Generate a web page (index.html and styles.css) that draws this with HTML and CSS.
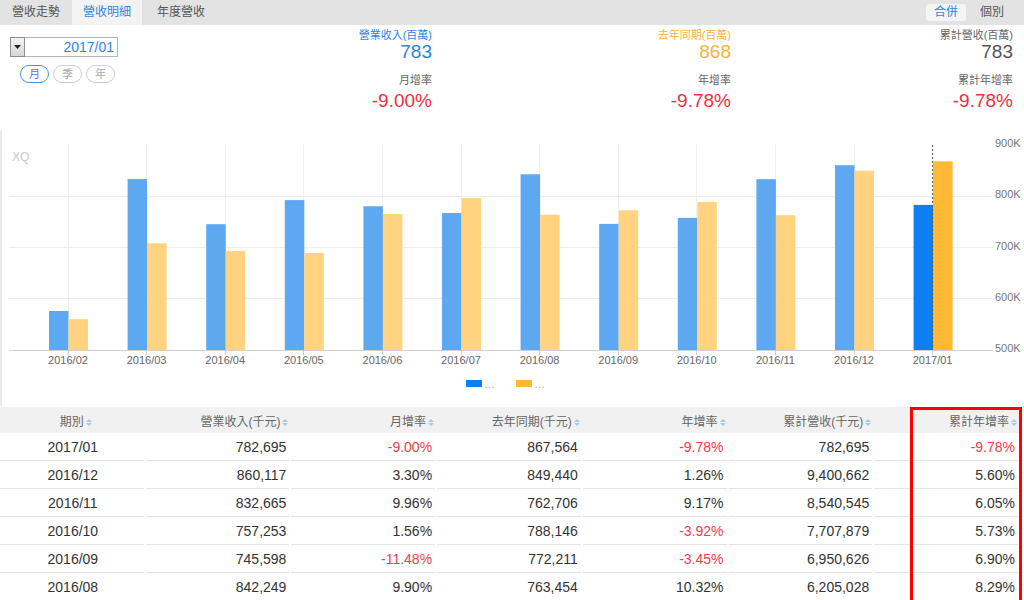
FILE: index.html
```html
<!DOCTYPE html>
<html lang="zh-Hant">
<head>
<meta charset="utf-8">
<title>營收明細</title>
<link rel="stylesheet" href="styles.css">
</head>
<body>
<div class="page">
  <div class="tabs">
    <div class="tab">營收走勢</div>
    <div class="tab active">營收明細</div>
    <div class="tab tab3">年度營收</div>
    <div class="tabs-right">
      <span class="seg on">合併</span>
      <span class="seg">個別</span>
    </div>
  </div>

  <div class="top">
    <div class="controls">
      <div class="picker">
        <span class="drop"><svg width="7" height="4" viewBox="0 0 7 4"><path d="M0 0H7L3.5 4Z" fill="#222"/></svg></span>
        <span class="date">2017/01</span>
      </div>
      <div class="pills">
        <span class="pill on">月</span>
        <span class="pill">季</span>
        <span class="pill">年</span>
      </div>
    </div>
    <div class="stat">
      <div class="lbl blue">營業收入(百萬)</div>
      <div class="val blue">783</div>
      <div class="lbl lbl2">月增率</div>
      <div class="val val2 red">-9.00%</div>
    </div>
    <div class="stat">
      <div class="lbl orange">去年同期(百萬)</div>
      <div class="val orange">868</div>
      <div class="lbl lbl2">年增率</div>
      <div class="val val2 red">-9.78%</div>
    </div>
    <div class="stat">
      <div class="lbl">累計營收(百萬)</div>
      <div class="val dark">783</div>
      <div class="lbl lbl2">累計年增率</div>
      <div class="val val2 red">-9.78%</div>
    </div>
  </div>

  <div class="chart">
    <svg width="1022" height="276" viewBox="0 0 1022 276" class="plot">
      <g stroke="#ececec" stroke-width="1">
        <line x1="9" y1="66.5" x2="993" y2="66.5"/>
        <line x1="9" y1="117.5" x2="993" y2="117.5"/>
        <line x1="9" y1="168.5" x2="993" y2="168.5"/>
      </g>
      <g stroke="#f0f0f0" stroke-width="1">
        <line x1="68.5" y1="15" x2="68.5" y2="220"/>
        <line x1="146.5" y1="15" x2="146.5" y2="220"/>
        <line x1="225.5" y1="15" x2="225.5" y2="220"/>
        <line x1="303.5" y1="15" x2="303.5" y2="220"/>
        <line x1="382.5" y1="15" x2="382.5" y2="220"/>
        <line x1="461.5" y1="15" x2="461.5" y2="220"/>
        <line x1="539.5" y1="15" x2="539.5" y2="220"/>
        <line x1="618.5" y1="15" x2="618.5" y2="220"/>
        <line x1="696.5" y1="15" x2="696.5" y2="220"/>
        <line x1="775.5" y1="15" x2="775.5" y2="220"/>
        <line x1="854.5" y1="15" x2="854.5" y2="220"/>
      </g>
      <text x="12" y="31" class="xq">XQ</text>
      <g fill="#5ea7f1">
        <rect x="49" y="181" width="19.5" height="39"/>
        <rect x="127.6" y="49.1" width="19.5" height="170.9"/>
        <rect x="206.2" y="94.2" width="19.5" height="125.8"/>
        <rect x="284.8" y="70.1" width="19.5" height="149.9"/>
        <rect x="363.4" y="76.3" width="19.5" height="143.7"/>
        <rect x="442" y="83" width="19.5" height="137"/>
        <rect x="520.6" y="44.3" width="19.5" height="175.7"/>
        <rect x="599.2" y="93.9" width="19.5" height="126.1"/>
        <rect x="677.8" y="87.9" width="19.5" height="132.1"/>
        <rect x="756.4" y="49.2" width="19.5" height="170.8"/>
        <rect x="835" y="35.2" width="19.5" height="184.8"/>
      </g>
      <g fill="#ffd37f">
        <rect x="68.5" y="189.2" width="19.5" height="30.8"/>
        <rect x="147.1" y="113.2" width="19.5" height="106.8"/>
        <rect x="225.7" y="120.9" width="19.5" height="99.1"/>
        <rect x="304.3" y="123" width="19.5" height="97"/>
        <rect x="382.9" y="84" width="19.5" height="136"/>
        <rect x="461.5" y="68.1" width="19.5" height="151.9"/>
        <rect x="540.1" y="84.7" width="19.5" height="135.3"/>
        <rect x="618.7" y="80.3" width="19.5" height="139.7"/>
        <rect x="697.3" y="72.1" width="19.5" height="147.9"/>
        <rect x="775.9" y="85.2" width="19.5" height="134.8"/>
        <rect x="854.5" y="40.7" width="19.5" height="179.3"/>
      </g>
      <rect x="913.6" y="74.9" width="19.5" height="145.1" fill="#0d7ff0"/>
      <rect x="933.1" y="31.3" width="19.5" height="188.7" fill="#ffb934"/>
      <line x1="932.6" y1="15" x2="932.6" y2="220" stroke="#555" stroke-width="1" stroke-dasharray="2 2"/>
      <line x1="9" y1="220.5" x2="993" y2="220.5" stroke="#cfcfcf" stroke-width="1"/>
      <g stroke="#cfcfcf" stroke-width="1">
        <line x1="68.5" y1="220" x2="68.5" y2="225"/>
        <line x1="146.5" y1="220" x2="146.5" y2="225"/>
        <line x1="225.5" y1="220" x2="225.5" y2="225"/>
        <line x1="303.5" y1="220" x2="303.5" y2="225"/>
        <line x1="382.5" y1="220" x2="382.5" y2="225"/>
        <line x1="461.5" y1="220" x2="461.5" y2="225"/>
        <line x1="539.5" y1="220" x2="539.5" y2="225"/>
        <line x1="618.5" y1="220" x2="618.5" y2="225"/>
        <line x1="696.5" y1="220" x2="696.5" y2="225"/>
        <line x1="775.5" y1="220" x2="775.5" y2="225"/>
        <line x1="854.5" y1="220" x2="854.5" y2="225"/>
        <line x1="932.5" y1="220" x2="932.5" y2="225"/>
      </g>
      <g class="ylab">
        <text x="995" y="17">900K</text>
        <text x="995" y="68">800K</text>
        <text x="995" y="120">700K</text>
        <text x="995" y="171">600K</text>
        <text x="995" y="222">500K</text>
      </g>
      <g class="xlab">
        <text x="68" y="234">2016/02</text>
        <text x="146.6" y="234">2016/03</text>
        <text x="225.2" y="234">2016/04</text>
        <text x="303.8" y="234">2016/05</text>
        <text x="382.4" y="234">2016/06</text>
        <text x="461" y="234">2016/07</text>
        <text x="539.6" y="234">2016/08</text>
        <text x="618.2" y="234">2016/09</text>
        <text x="696.8" y="234">2016/10</text>
        <text x="775.4" y="234">2016/11</text>
        <text x="854" y="234">2016/12</text>
        <text x="932.6" y="234">2017/01</text>
      </g>
      <rect x="466" y="250" width="16" height="7" fill="#0d7ff0"/>
      <text x="484" y="258" class="dots">…</text>
      <rect x="516" y="250" width="16" height="7" fill="#ffb934"/>
      <text x="534" y="258" class="dots">…</text>
    </svg>
  </div>

  <div class="tablewrap">
    <table class="grid">
      <thead>
        <tr>
          <th class="c">期別<svg class="sort" width="6" height="9" viewBox="0 0 6 9"><path d="M0 4L3 1L6 4ZM0 5L3 8L6 5Z"/></svg></th>
          <th>營業收入(千元)<svg class="sort" width="6" height="9" viewBox="0 0 6 9"><path d="M0 4L3 1L6 4ZM0 5L3 8L6 5Z"/></svg></th>
          <th>月增率<svg class="sort" width="6" height="9" viewBox="0 0 6 9"><path d="M0 4L3 1L6 4ZM0 5L3 8L6 5Z"/></svg></th>
          <th>去年同期(千元)<svg class="sort" width="6" height="9" viewBox="0 0 6 9"><path d="M0 4L3 1L6 4ZM0 5L3 8L6 5Z"/></svg></th>
          <th>年增率<svg class="sort" width="6" height="9" viewBox="0 0 6 9"><path d="M0 4L3 1L6 4ZM0 5L3 8L6 5Z"/></svg></th>
          <th>累計營收(千元)<svg class="sort" width="6" height="9" viewBox="0 0 6 9"><path d="M0 4L3 1L6 4ZM0 5L3 8L6 5Z"/></svg></th>
          <th>累計年增率<svg class="sort" width="6" height="9" viewBox="0 0 6 9"><path d="M0 4L3 1L6 4ZM0 5L3 8L6 5Z"/></svg></th>
        </tr>
      </thead>
      <tbody>
        <tr><td class="c">2017/01</td><td>782,695</td><td class="neg">-9.00%</td><td>867,564</td><td class="neg">-9.78%</td><td>782,695</td><td class="neg">-9.78%</td></tr>
        <tr><td class="c">2016/12</td><td>860,117</td><td>3.30%</td><td>849,440</td><td>1.26%</td><td>9,400,662</td><td>5.60%</td></tr>
        <tr><td class="c">2016/11</td><td>832,665</td><td>9.96%</td><td>762,706</td><td>9.17%</td><td>8,540,545</td><td>6.05%</td></tr>
        <tr><td class="c">2016/10</td><td>757,253</td><td>1.56%</td><td>788,146</td><td class="neg">-3.92%</td><td>7,707,879</td><td>5.73%</td></tr>
        <tr><td class="c">2016/09</td><td>745,598</td><td class="neg">-11.48%</td><td>772,211</td><td class="neg">-3.45%</td><td>6,950,626</td><td>6.90%</td></tr>
        <tr><td class="c">2016/08</td><td>842,249</td><td>9.90%</td><td>763,454</td><td>10.32%</td><td>6,205,028</td><td>8.29%</td></tr>
      </tbody>
    </table>
    <div class="highlight"></div>
  </div>
</div>
</body>
</html>
```

FILE: styles.css
```css
html, body {
  margin: 0;
  padding: 0;
  height: 600px;
  overflow: hidden;
  background: #fff;
}
body {
  font-family: "Liberation Sans", Arial, "Noto Sans CJK TC", sans-serif;
  color: #333;
}
.page {
  width: 1024px;
  height: 600px;
  overflow: hidden;
}

/* tabs */
.tabs {
  display: flex;
  height: 25px;
  background: #e3e3e3;
  font-size: 12px;
  line-height: 25px;
  color: #555;
}
.tab {
  padding: 0 11px;
}
.tab:first-child {
  padding-left: 12px;
  padding-right: 12px;
}
.tab.active {
  background: #f3f3f3;
  color: #2f86e0;
}
.tab3 {
  padding-left: 15px;
}
.tabs-right {
  margin-left: auto;
  display: flex;
  align-items: center;
  gap: 6px;
  padding-right: 12px;
}
.seg {
  line-height: 17px;
  padding: 0 8px;
  border-radius: 3px;
  font-size: 12px;
  color: #555;
}
.seg.on {
  background: #f5f5f5;
  color: #2f86e0;
}

/* top */
.top {
  display: grid;
  grid-template-columns: 133px 299px 299px 282px;
  height: 105px;
}
.controls {
  padding: 12px 0 0 10px;
}
.picker {
  display: flex;
  width: 108px;
  height: 20px;
}
.drop {
  width: 13px;
  height: 18px;
  border: 1px solid #8e8e8e;
  background: linear-gradient(#f4f4f4, #d6d6d6);
  display: flex;
  align-items: center;
  justify-content: center;
}
.date {
  flex: 1;
  height: 18px;
  border: 1px solid #b5b5b5;
  border-left: none;
  text-align: right;
  padding-right: 3px;
  font-size: 14px;
  line-height: 18px;
  color: #2f86e0;
}
.pills {
  display: flex;
  gap: 4px;
  margin: 8px 0 0 10px;
}
.pill {
  width: 27px;
  height: 16px;
  border: 1px solid #cfcfcf;
  border-radius: 9px;
  font-size: 11px;
  line-height: 16px;
  text-align: center;
  color: #aaa;
}
.pill.on {
  border-color: #4a92e4;
  color: #2f86e0;
}
.stat {
  text-align: right;
  padding-top: 3px;
}
.lbl {
  font-size: 11px;
  line-height: 14px;
  color: #666;
}
.lbl2 {
  margin-top: 11px;
}
.val {
  font-size: 19px;
  line-height: 20px;
}
.val2 {
  line-height: 28px;
}
.blue { color: #2f82e3; }
.orange { color: #f7b33e; }
.dark { color: #555; }
.red { color: #f42c40; }

/* chart */
.chart {
  height: 276px;
  border-left: 2px solid #e9e9e9;
}
.plot {
  display: block;
  margin-left: -2px;
}
.xq {
  font-size: 12px;
  fill: #c9c9c9;
}
.ylab text {
  font-size: 11px;
  fill: #777;
}
.xlab text {
  font-size: 11px;
  fill: #666;
  text-anchor: middle;
}
.dots {
  font-size: 11px;
  fill: #aaa;
}

/* table */
.tablewrap {
  position: relative;
  padding-top: 1px;
}
.grid {
  width: 1020px;
  border-collapse: separate;
  border-spacing: 0;
  table-layout: fixed;
}
.grid th {
  background: #f1f1f1;
  height: 26px;
  padding: 0 3px 0 0;
  font-weight: normal;
  font-size: 12px;
  color: #666;
  text-align: right;
  white-space: nowrap;
}
.grid th.c {
  text-align: center;
  padding: 0 0 0 6px;
}
.sort {
  margin-left: 2px;
  vertical-align: -1px;
  fill: #a9c9e9;
}
.grid td {
  height: 28px;
  padding: 0 5px 0 0;
  font-size: 14px;
  color: #333;
  text-align: right;
  background: linear-gradient(#e4e4e4, #e4e4e4) no-repeat left bottom / calc(100% - 2px) 1px;
}
.grid td.c {
  text-align: center;
  padding: 0;
}
.grid td.neg {
  color: #ef3d4e;
}
.highlight {
  position: absolute;
  left: 910px;
  top: 1px;
  width: 106px;
  height: 220px;
  border: 3px solid #ff0000;
}
```
